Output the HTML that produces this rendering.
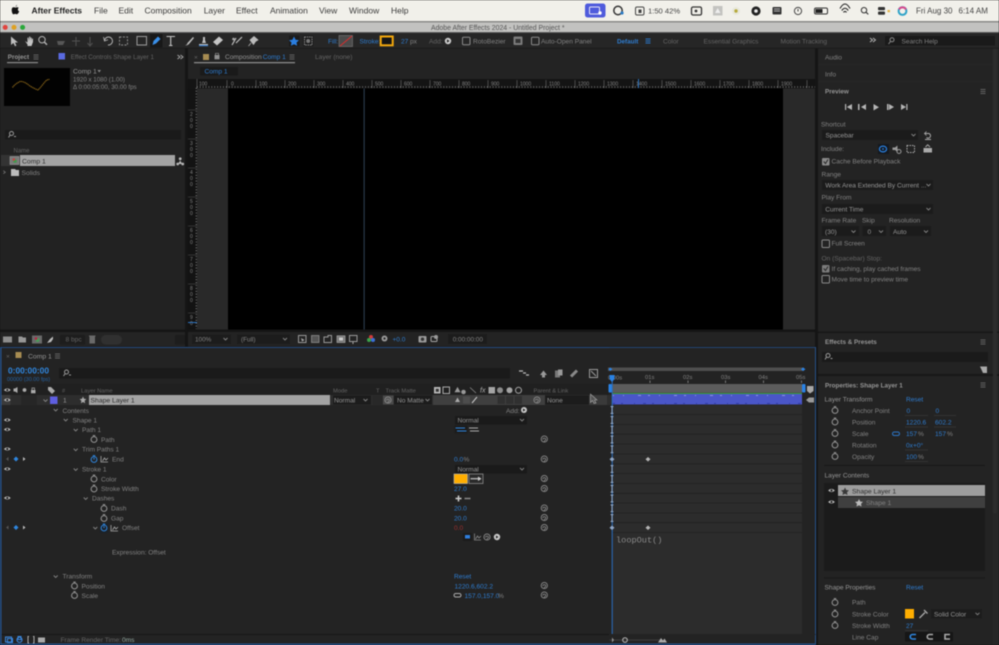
<!DOCTYPE html>
<html><head><meta charset="utf-8"><style>
html,body{margin:0;padding:0;background:#151515;width:999px;height:645px;overflow:hidden}
svg{display:block;filter:blur(.5px)}
text{font-family:"Liberation Sans",sans-serif;font-size:6.6px;fill:#828282}
.m{font-size:8.5px;fill:#3c3c3c}
.b{fill:#2e7ccf}
.l{fill:#959595}
.d{fill:#2e2e2e}
.h{fill:#646464}
.ic{fill:none;stroke:#b5b5b5;stroke-width:1}
.dk{fill:#1a1a1a}
</style></head><body>
<svg width="999" height="645" viewBox="0 0 999 645" xmlns="http://www.w3.org/2000/svg">
<defs>
<g id="sw"><circle cx="0" cy="0.5" r="2.9" fill="none" stroke="#979797" stroke-width="1"/><path d="M-1.2-3.4H1.2" stroke="#979797" stroke-width="1"/></g>
<g id="swb"><circle cx="0" cy="0.5" r="2.9" fill="none" stroke="#2f86de" stroke-width="1"/><path d="M-1.2-3.4H1.2M0 .5V-1.2" stroke="#2f86de" stroke-width="1"/></g>
<g id="sp"><circle r="3.1" fill="none" stroke="#8a8a8a" stroke-width=".9"/><path d="M-1.4 .5A1.4 1.4 0 1 1 1.4 .6L-.4 2.6" fill="none" stroke="#8a8a8a" stroke-width=".8"/></g>
<g id="eye"><path d="M-3.4 0Q0-3.2 3.4 0Q0 3.2-3.4 0Z" fill="#bdbdbd"/><circle r="1.1" fill="#222"/></g>
<g id="hb"><path d="M-2.5-2H2.5M-2.5 0H2.5M-2.5 2H2.5" stroke="#777" stroke-width=".8"/></g>
<g id="ar"><path d="M-2-1L0 1L2-1" fill="none" stroke="#858585" stroke-width=".9"/></g>
<g id="kf"><path d="M0-3.4V3.4M-1.4-3.4H1.4M-1.4 3.4H1.4" stroke="#8fa7c8" stroke-width="1.1"/></g>
</defs>

<!-- menu bar -->
<rect width="999" height="22" fill="#f1f0ea"/>
<rect y="21" width="999" height="1.5" fill="#8b8b88"/>
<path d="M15.5 6.5Q16.5 5.5 17 4.5Q17 6.2 15.7 6.8ZM12.5 7.5C14 6.8 15 7.6 15.7 7.6C16.4 7.6 17.3 6.8 18.7 7.7C17.4 8.8 17.7 10.7 19.2 11.3C18.6 13 17.6 14.4 16.7 14.3C15.9 14.2 15.6 13.8 15 13.9C14.3 14 13.8 14.5 13.2 14.3C12 13.7 10.9 9 12.5 7.5Z" fill="#111"/>
<text class="m" x="31.5" y="13.4" style="font-weight:700;fill:#222">After Effects</text>
<text class="m" x="94" y="13.4">File</text><text class="m" x="118.5" y="13.4">Edit</text><text class="m" x="144.5" y="13.4">Composition</text><text class="m" x="203.7" y="13.4">Layer</text><text class="m" x="236" y="13.4">Effect</text><text class="m" x="270" y="13.4">Animation</text><text class="m" x="319" y="13.4">View</text><text class="m" x="349" y="13.4">Window</text><text class="m" x="391" y="13.4">Help</text>
<rect x="585" y="3.5" width="20.5" height="14" rx="2.5" fill="#4f5bdc"/>
<rect x="589.5" y="7" width="10" height="7" rx="1" fill="none" stroke="#e6e6f8"/><circle cx="600" cy="13" r="1.7" fill="#fff"/>
<circle cx="618" cy="10.5" r="4.2" fill="none" stroke="#333" stroke-width="1.5"/><circle cx="622" cy="13" r="1.6" fill="#2a7ac4"/>
<rect x="635.5" y="7" width="8.5" height="8" rx="1.5" fill="none" stroke="#444"/><rect x="638.5" y="9.5" width="3" height="3.5" fill="#444"/>
<text x="648" y="13.5" style="font-size:7.6px;fill:#444">1:50 42%</text>
<rect x="691.5" y="7" width="10" height="8" rx="1.5" fill="none" stroke="#333" stroke-width="1.3"/><circle cx="696" cy="11" r="1.4" fill="#333"/>
<rect x="713" y="6" width="9.5" height="9.5" fill="#c3c3c0"/><path d="M715 13L717.7 8L720.5 13Z" fill="#eee"/>
<circle cx="736" cy="11" r="4" fill="#e8e8dc"/><circle cx="736" cy="11" r="1.7" fill="#b5a93b"/>
<circle cx="756" cy="11" r="4.6" fill="#222"/><circle cx="756" cy="11" r="1.8" fill="#eee"/>
<rect x="772.5" y="7" width="9" height="7.5" rx="1" fill="#333"/><path d="M774 9H780M774 11H780" stroke="#ddd" stroke-width=".7"/>
<circle cx="798" cy="11" r="3.6" fill="none" stroke="#444"/><path d="M798 9V11.5" stroke="#444"/>
<rect x="814.5" y="8" width="13" height="6" rx="1.5" fill="none" stroke="#333"/><rect x="815.5" y="9" width="7" height="4" fill="#222"/>
<path d="M840 8.5Q845-.5 850 8.5M841.8 10.5Q845 6 848.2 10.5M843.5 12.4Q845 10.5 846.5 12.4" fill="none" stroke="#222" stroke-width="1.1"/>
<circle cx="864" cy="10.2" r="2.7" fill="none" stroke="#333"/><path d="M866 12.2L868.3 14.4" stroke="#333" stroke-width="1.1"/>
<rect x="878" y="7" width="7" height="3.2" rx="1" fill="#333"/><rect x="878" y="11.5" width="7" height="3.2" rx="1" fill="#333"/><rect x="887.5" y="10" width="2.5" height="2.2" fill="#e5b64a"/>
<circle cx="902.5" cy="11" r="3.9" fill="none" stroke="#2fa3c8" stroke-width="2"/><path d="M899 9.5A4 4 0 0 1 906 9.5" fill="none" stroke="#d9488c" stroke-width="2"/>
<text x="916" y="13.4" style="font-size:8px;fill:#444">Fri Aug 30</text><text x="958.5" y="13.4" style="font-size:8px;fill:#444">6:14 AM</text>

<!-- title bar -->
<rect y="22.5" width="999" height="9.5" fill="#c2c2c0"/>
<rect y="32" width="999" height="1.2" fill="#5a5a5a"/>
<circle cx="5.2" cy="27.4" r="2.5" fill="#e0443e"/><circle cx="14" cy="27.4" r="2.5" fill="#dea123"/><circle cx="22.6" cy="27.4" r="2.5" fill="#2aa83a"/>
<text x="431" y="29.8" style="font-size:6.9px;fill:#565656">Adobe After Effects 2024 - Untitled Project *</text>

<!-- tool bar -->
<rect y="33" width="999" height="15" fill="#262626"/>
<path d="M11 36.5V45L13.4 43L15 46.3L16.4 45.6L15 42.5H18Z" fill="#bdbdbd"/>
<path d="M25 41L27.5 44.5V46H31.5L33 42V38.5L32 39V41L31.6 37.5L30.6 37.7V41L30.2 36.5L29.2 36.6L29 41L28.4 37.5L27.5 37.8L27.5 42.5Z" fill="#c4c4c4"/>
<circle cx="42" cy="39.7" r="3.2" class="ic"/><path d="M44.3 42L47 44.7" class="ic" style="stroke-width:1.4"/>
<path d="M57 41H65L63 45H58Z" fill="#575757"/><path d="M76 37V46M72 41H80M90 37V45M87.5 43L90 46L92.5 43" fill="none" stroke="#515151"/>
<path d="M104.5 41A4 4 0 1 1 108 45" class="ic"/><path d="M103.5 37L104.5 41L108 39.7" class="ic" style="stroke-width:.8"/>
<rect x="119.5" y="37" width="8" height="8" fill="none" stroke="#8e8e8e" stroke-dasharray="2 1.4"/>
<rect x="137" y="36.5" width="9.5" height="8.5" class="ic" style="stroke:#9a9a9a"/>
<rect x="150" y="34" width="12.5" height="13.5" fill="#181818"/><path d="M152.5 45L153.5 41L158 36.5L160.5 39L156 43.5Z" fill="#3a8fe8"/>
<path d="M166.5 36.5H175M170.7 36.5V45.5M169 45.5H172.5" fill="none" stroke="#c4c4c4" stroke-width="1.1"/>
<path d="M185 45.5Q187 45 187.5 43L193 37L194 38L189 44Q187.5 45.5 185 45.5Z" fill="#bdbdbd"/>
<path d="M199 44H208V46H199ZM202 43L203 40V37H205V40L206 43Z" fill="#c0c0c0"/><rect x="199" y="45" width="9" height="1.2" fill="#3b7bc7"/>
<path d="M213 42L219 36.5L223 40L217 45.5Z" fill="#c5c5c5"/>
<path d="M232 45L236 38M236 43L242 37" stroke="#bdbdbd" stroke-width="1.2"/><circle cx="233.5" cy="39" r="1.3" fill="#aaa"/>
<path d="M250 40L254 36.5L258 40L255.5 41.5L253.5 44.5ZM251 43L248.5 46" fill="#bbb" stroke="#bbb" stroke-width=".7"/>
<rect x="289" y="35.5" width="10.5" height="11" fill="#1b1b1b"/><path d="M294 36.5L295.6 39.7L299 40.2L296.5 42.5L297.1 45.8L294 44.2L290.9 45.8L291.5 42.5L289 40.2L292.4 39.7Z" fill="#2a7ee0"/>
<rect x="303" y="35.5" width="10.5" height="11" fill="#1d1d1d"/><rect x="304.5" y="37" width="7.5" height="8" fill="none" stroke="#8a8a8a" stroke-dasharray="1.5 .8"/><circle cx="308.2" cy="41" r="2" fill="#777"/>
<text class="b" x="328" y="43.3">Fill:</text><rect x="339" y="35.5" width="13.5" height="11" fill="#4b4b4b" stroke="#7b7b7b" stroke-width=".6"/><path d="M340 46L352 36" stroke="#e02b2b" stroke-width=".9"/>
<text class="b" x="359.5" y="43.3">Stroke:</text><rect x="380.7" y="36.5" width="12" height="8.8" fill="#151515" stroke="#f3a80d" stroke-width="2"/>
<text class="b" x="401" y="43.3">27</text><text x="410" y="43.3">px</text><text class="h" x="429" y="43.3">Add:</text><circle cx="448" cy="41" r="3.2" fill="#ccc"/><path d="M447 39.4L449.6 41L447 42.6Z" fill="#222"/>
<rect x="462.5" y="37.3" width="7.5" height="7.5" rx="1" fill="none" stroke="#8a8a8a"/><text x="473" y="43.3">RotoBezier</text>
<rect x="513.5" y="36.5" width="9" height="8.5" rx="1" fill="#7b7b7b"/><rect x="515.5" y="39" width="5" height="4" fill="#333"/>
<rect x="531.5" y="37.3" width="7.5" height="7.5" rx="1" fill="none" stroke="#8a8a8a"/><text x="541" y="43.3">Auto-Open Panel</text>
<text class="b" x="617" y="43.3" style="font-weight:700;font-size:6.3px">Default</text><g transform="translate(648 41)"><path d="M-2.5-2H2.5M-2.5 0H2.5M-2.5 2H2.5" stroke="#2b75c6"/></g>
<text class="h" x="663" y="43.3">Color</text><text class="h" x="703.5" y="43.3">Essential Graphics</text><text class="h" x="780.5" y="43.3">Motion Tracking</text>
<path d="M870 38L872.5 40L870 42M873 38L875.5 40L873 42" fill="none" stroke="#bbb" stroke-width=".9"/>
<rect x="885" y="36" width="110" height="9.5" class="dk"/><circle cx="892" cy="39.8" r="2" class="ic" style="stroke:#888"/><path d="M890.5 41.5L888.5 44" stroke="#888"/><text x="901.5" y="43.5">Search Help</text>

<!-- project panel -->
<rect x="0" y="48.5" width="185" height="281" fill="#222"/>
<text class="l" x="7.8" y="59" style="font-size:6.3px;font-weight:700">Project</text><rect x="7" y="62" width="31" height="1.2" fill="#8a8a8a"/><use href="#hb" x="36" y="57"/>
<rect x="58.5" y="53" width="6.5" height="6.5" fill="#5a6ae0"/><text class="h" x="70.7" y="59" style="font-size:6.25px">Effect Controls Shape Layer 1</text>
<path d="M177.5 55L180 57L177.5 59M180.5 55L183 57L180.5 59" fill="none" stroke="#aaa" stroke-width=".9"/>
<rect x="4" y="68" width="66" height="38" fill="#020202"/>
<path d="M12.5 87.5Q15 84 20 81.5Q24 81 30 86Q35 89 38 90Q41 87 44 83Q47 79 49.5 79.5" fill="none" stroke="#8a6518" stroke-width="1.1" stroke-dasharray="1.3 .5"/>
<text class="l" x="73" y="73.5" style="font-size:6.8px">Comp 1</text><path d="M97.5 70L101 70L99.2 72.5Z" fill="#888"/>
<text x="73" y="81.4" style="font-size:6.2px">1920 x 1080 (1.00)</text><text x="73" y="89" style="font-size:6.2px">Δ 0:00:05:00, 30.00 fps</text>
<rect x="5" y="130" width="176" height="9.5" class="dk"/><circle cx="11.5" cy="133.5" r="2" class="ic" style="stroke:#999"/><path d="M10 135.2L8.5 137.5M14 136.5H16" stroke="#999"/>
<text class="h" x="13.5" y="152.5" style="font-size:6px">Name</text>
<rect x="1" y="155" width="19" height="11" fill="#333"/><rect x="10" y="156.5" width="9" height="8" fill="#7a7a7a" stroke="#a5a5a5" stroke-width=".5"/><circle cx="15" cy="161" r="1.8" fill="#3f9c4b"/><circle cx="13.8" cy="159.5" r="1.3" fill="#c04545"/>
<rect x="20" y="155" width="155" height="11" fill="#a3a3a3"/><text class="d" x="22" y="163.4" style="font-size:6.8px">Comp 1</text>
<path d="M178 164L180.2 160.5L182.4 164Z" fill="#b5b5b5"/><circle cx="180.2" cy="158.8" r="1.4" fill="#b5b5b5"/><circle cx="177.7" cy="164" r="1.4" fill="#b5b5b5"/><circle cx="182.7" cy="164" r="1.4" fill="#b5b5b5"/>
<path d="M3.3 170.7L5.3 172.2L3.3 173.7" fill="none" stroke="#777" stroke-width=".8"/><path d="M11 169H15L16 170H19V176H11Z" fill="#bcbcbc"/><text x="21.5" y="174.8" style="font-size:6.8px">Solids</text>
<!-- project footer -->
<rect x="0" y="332" width="185" height="14.5" fill="#242424"/>
<rect x="3" y="336.5" width="9" height="6" fill="#8d8d8d"/><path d="M18.5 336.5H22L23 337.5H26V342.5H18.5Z" fill="#979797"/><rect x="32" y="335.5" width="10" height="8" fill="#6a6a6a"/><circle cx="37.5" cy="340" r="2" fill="#4b9a5a"/><circle cx="36" cy="338.5" r="1.3" fill="#b24"/><path d="M47 343L50 339L53 336.5V339L51 342Z" fill="#bbb"/>
<rect x="60" y="335" width="25" height="9.5" fill="#1d1d1d"/><text class="h" x="65.5" y="341.6">8 bpc</text><rect x="89.5" y="336.5" width="5.5" height="7" fill="#6a6a6a"/><rect x="89" y="335.5" width="6.5" height="1" fill="#6a6a6a"/><rect x="101" y="335" width="21" height="9.5" rx="4.7" fill="#303030"/>
<rect x="175" y="335" width="10" height="9.5" fill="#1d1d1d"/>

<!-- composition panel -->
<rect x="188" y="48.5" width="627" height="281" fill="#232323"/>
<text class="h" x="194" y="59.3">×</text><rect x="203" y="54" width="6" height="6" fill="#a78c52"/>
<rect x="214.5" y="55" width="5" height="4.3" fill="#8f8f8f"/><path d="M215.5 55V53.3H218.5V55" fill="none" stroke="#8f8f8f" stroke-width=".7"/>
<text class="l" x="225" y="59">Composition</text><text class="b" x="262.7" y="59">Comp 1</text><use href="#hb" x="292" y="57"/><rect x="194" y="62" width="101" height="1.3" fill="#8a8a8a"/>
<text class="h" x="315" y="59">Layer (none)</text>
<rect x="200" y="67" width="38" height="8.5" fill="#1a1a1a"/><text class="b" x="204.5" y="73.5">Comp 1</text>
<!-- rulers -->
<rect x="188" y="79" width="627" height="9.5" fill="#141414"/>
<path stroke="#888" stroke-width=".45" d="M197 88V79M227 88V80M256 88V80M285 88V80M314 88V80M343 88V80M372 88V80M401 88V80M430 88V80M459 88V80M488 88V80M517 88V80M546 88V80M575 88V80M604 88V80M633 88V80M662 88V80M691 88V80M720 88V80M749 88V80M778 88V80M807 88V80"/>
<path stroke="#9a9a9a" stroke-width="1.4" stroke-dasharray=".6 2.3" d="M197 87H815"/>
<g><text x="199" y="85.5" style="font-size:5px">100</text><text x="231" y="85.5" style="font-size:5px">0</text><text x="259" y="85.5" style="font-size:5px">100</text><text x="288" y="85.5" style="font-size:5px">200</text><text x="317" y="85.5" style="font-size:5px">300</text><text x="346" y="85.5" style="font-size:5px">400</text><text x="375" y="85.5" style="font-size:5px">500</text><text x="404" y="85.5" style="font-size:5px">600</text><text x="433" y="85.5" style="font-size:5px">700</text><text x="462" y="85.5" style="font-size:5px">800</text><text x="491" y="85.5" style="font-size:5px">900</text><text x="520" y="85.5" style="font-size:5px">1000</text><text x="549" y="85.5" style="font-size:5px">1100</text><text x="578" y="85.5" style="font-size:5px">1200</text><text x="607" y="85.5" style="font-size:5px">1300</text><text x="636" y="85.5" style="font-size:5px">1400</text><text x="665" y="85.5" style="font-size:5px">1500</text><text x="694" y="85.5" style="font-size:5px">1600</text><text x="723" y="85.5" style="font-size:5px">1700</text><text x="752" y="85.5" style="font-size:5px">1800</text><text x="781" y="85.5" style="font-size:5px">1900</text></g>
<rect x="638" y="79" width="1" height="9" fill="#2a72c0"/>
<rect x="188" y="88.5" width="9" height="241" fill="#131313"/>
<path stroke="#9a9a9a" stroke-width="1.4" stroke-dasharray=".6 2.3" d="M196.3 88V329"/>
<path stroke="#555" stroke-width=".6" d="M188 110H197M188 139H197M188 168H197M188 197H197M188 226H197M188 255H197M188 284H197M188 313H197"/>
<g><text x="190" y="116" style="font-size:5px">2</text><text x="190" y="122" style="font-size:5px">0</text><text x="190" y="128" style="font-size:5px">0</text><text x="190" y="145" style="font-size:5px">3</text><text x="190" y="151" style="font-size:5px">0</text><text x="190" y="157" style="font-size:5px">0</text><text x="190" y="174" style="font-size:5px">4</text><text x="190" y="180" style="font-size:5px">0</text><text x="190" y="186" style="font-size:5px">0</text><text x="190" y="203" style="font-size:5px">5</text><text x="190" y="209" style="font-size:5px">0</text><text x="190" y="215" style="font-size:5px">0</text><text x="190" y="232" style="font-size:5px">6</text><text x="190" y="238" style="font-size:5px">0</text><text x="190" y="244" style="font-size:5px">0</text><text x="190" y="261" style="font-size:5px">7</text><text x="190" y="267" style="font-size:5px">0</text><text x="190" y="273" style="font-size:5px">0</text><text x="190" y="290" style="font-size:5px">8</text><text x="190" y="296" style="font-size:5px">0</text><text x="190" y="302" style="font-size:5px">0</text><text x="190" y="319" style="font-size:5px">9</text><text x="190" y="325" style="font-size:5px">0</text></g>
<rect x="188" y="322" width="9" height="1" fill="#2a72c0"/>
<rect x="197" y="88.5" width="31" height="241" fill="#292929"/><rect x="783" y="88.5" width="32" height="241" fill="#292929"/>
<rect x="228" y="88.5" width="555" height="241" fill="#000"/>
<rect x="363.7" y="88.5" width=".9" height="241" fill="#34495f"/>
<!-- comp footer -->
<rect x="188" y="332" width="627" height="14.5" fill="#232323"/>
<rect x="192" y="334.5" width="39" height="9.5" fill="#1c1c1c"/><text x="195" y="341.6" style="font-size:6.4px">100%</text><use href="#ar" x="225.5" y="339"/>
<rect x="237" y="334.5" width="53" height="9.5" fill="#1c1c1c"/><text x="241" y="341.6" style="font-size:6.4px">(Full)</text><use href="#ar" x="285" y="339"/>
<rect x="298.5" y="335.5" width="7.5" height="7" fill="none" stroke="#979797"/><path d="M301 338L304.5 340L302 341.5Z" fill="#aaa"/>
<rect x="311.5" y="335.5" width="7.5" height="7" fill="#555" stroke="#979797" stroke-width=".7"/>
<path d="M324 342.5V337H328V335.5H331.5V342.5Z" fill="none" stroke="#979797"/>
<rect x="337" y="335.8" width="8" height="6.7" fill="#777" stroke="#a5a5a5" stroke-width=".7"/><rect x="339" y="337.5" width="4" height="3" fill="#ccc"/>
<rect x="349.5" y="335.5" width="7.5" height="6" fill="none" stroke="#979797"/><path d="M353 342V344" stroke="#aaa"/>
<circle cx="371" cy="337" r="2" fill="#d23b3b"/><circle cx="369" cy="340" r="2" fill="#3ba34b"/><circle cx="373" cy="340" r="2" fill="#3a6fd8"/>
<circle cx="384.5" cy="338.5" r="3" fill="#999"/><circle cx="384.5" cy="338.5" r="1.1" fill="#232323"/>
<text class="b" x="392.5" y="341.5" style="font-size:6.5px">+0.0</text>
<rect x="418.5" y="336" width="8" height="6.5" rx="1" fill="#9a9a9a"/><circle cx="422.5" cy="339.2" r="1.7" fill="#333"/>
<rect x="431" y="336.5" width="6" height="5" rx="1" fill="none" stroke="#a5a5a5"/><circle cx="436" cy="337" r="2" fill="#999"/>
<rect x="448" y="334" width="39" height="9.8" fill="#1c1c1c"/><text x="452.7" y="341.6" style="font-size:6.4px">0:00:00:00</text>

<!-- right column -->
<rect x="818" y="48.5" width="181" height="596.5" fill="#262626"/>
<rect x="818" y="48.5" width="174.5" height="15.5" fill="#232323"/><rect x="818" y="65.5" width="174.5" height="15.5" fill="#232323"/><rect x="818" y="82.5" width="174.5" height="249" fill="#232323"/>
<rect x="818" y="331.5" width="181" height="1.5" fill="#171717"/><rect x="818" y="374" width="181" height="2" fill="#171717"/>
<text x="825" y="59.3">Audio</text><text x="825" y="76.3">Info</text><text class="l" x="825" y="93.5" style="font-weight:700;font-size:6.3px">Preview</text><use href="#hb" x="983" y="91.5"/>
<g fill="#b5b5b5"><path d="M845 104V110H846.2V104ZM852 104L846.8 107L852 110Z"/><path d="M866 104L861 107L866 110ZM858 104H859.5V110H858Z"/><path d="M873.5 104V110.5L879 107.2Z"/><path d="M887 104V110H888.5V104ZM889 104L894 107L889 110Z"/><path d="M901 104L906 107L901 110ZM906.3 104H907.5V110H906.3Z"/></g>
<text x="821" y="126.3">Shortcut</text>
<rect x="822" y="130" width="96" height="10" fill="#1b1b1b"/><text class="l" x="825.5" y="137.3">Spacebar</text><use href="#ar" x="913.5" y="135"/>
<path d="M925 133.5H929A2.4 2.4 0 1 1 926.5 137.5" class="ic" style="stroke:#aaa"/><path d="M926.5 131.5L924.5 133.5L926.5 135.5" class="ic" style="stroke:#aaa;stroke-width:.8"/><path d="M925 139.5H931" stroke="#aaa"/>
<text x="821" y="151">Include:</text>
<rect x="878" y="144" width="11" height="10" fill="#15191f"/><ellipse cx="883" cy="149" rx="3.6" ry="2.9" fill="none" stroke="#2a82e4" stroke-width="1.2"/><circle cx="883" cy="149" r=".9" fill="#2a82e4"/>
<path d="M892.5 147.5H895L897.5 145.5V152L895 150H892.5Z" fill="#9a9a9a"/><circle cx="899" cy="151.5" r="2" fill="none" stroke="#9a9a9a"/>
<rect x="907" y="145.5" width="7.5" height="7" fill="none" stroke="#aaa" stroke-dasharray="1.5 1"/>
<rect x="923.5" y="148" width="8.5" height="4.5" fill="#aaa"/><path d="M925.5 147L927.7 144.8L930 147" fill="none" stroke="#aaa"/>
<rect x="822" y="158" width="7.5" height="7.5" rx="1" fill="#8a8a8a"/><path d="M823.7 161.5L825.5 163.5L828 159.5" fill="none" stroke="#2a2a2a"/><text x="831.5" y="163.4">Cache Before Playback</text>
<text x="821.5" y="176.5">Range</text>
<rect x="822" y="180" width="111" height="10" fill="#1b1b1b"/><text class="l" x="825.3" y="187.5">Work Area Extended By Current ...</text><use href="#ar" x="928.5" y="185"/>
<text x="821.5" y="199.5">Play From</text>
<rect x="822" y="204" width="111" height="10" fill="#1b1b1b"/><text class="l" x="825.3" y="211.5">Current Time</text><use href="#ar" x="928.5" y="209"/>
<text x="821.5" y="222.5">Frame Rate</text><text x="862" y="222.5">Skip</text><text x="889" y="222.5">Resolution</text>
<rect x="822" y="226" width="37" height="10" fill="#1b1b1b"/><text class="l" x="825" y="233.8">(30)</text><use href="#ar" x="853.5" y="231.5"/>
<rect x="862.5" y="226" width="23.5" height="10" fill="#1b1b1b"/><text class="l" x="867.5" y="233.8">0</text><use href="#ar" x="881" y="231.5"/>
<rect x="890" y="226" width="41" height="10" fill="#1b1b1b"/><text class="l" x="893" y="233.8">Auto</text><use href="#ar" x="926" y="231.5"/>
<rect x="822" y="240" width="7.5" height="7.5" rx="1" fill="none" stroke="#8a8a8a"/><text x="831.5" y="245.7">Full Screen</text>
<text class="h" x="821.5" y="260.3">On (Spacebar) Stop:</text>
<rect x="822" y="265" width="7.5" height="7.5" rx="1" fill="#7b7b7b"/><path d="M823.7 268.5L825.5 270.5L828 266.5" fill="none" stroke="#2a2a2a"/><text x="831.5" y="271.2">If caching, play cached frames</text>
<rect x="822" y="275.5" width="7.5" height="7.5" rx="1" fill="none" stroke="#8a8a8a"/><text x="831.5" y="281.7">Move time to preview time</text>

<!-- effects -->
<rect x="818" y="333" width="174.5" height="41" fill="#232323"/>
<text class="l" x="825" y="344" style="font-weight:700;font-size:6.3px">Effects &amp; Presets</text><use href="#hb" x="983" y="342"/>
<rect x="822" y="352" width="166" height="10" class="dk"/><circle cx="828" cy="355.5" r="2" class="ic" style="stroke:#999"/><path d="M826.5 357L825 359.5M830.5 358.5H832.5" stroke="#999"/>
<path d="M980 366.5H987V373H983Z" fill="#aaa"/>
<!-- properties -->
<rect x="818" y="376" width="174.5" height="269" fill="#232323"/>
<rect x="993" y="48.5" width="4" height="465" rx="2" fill="#2c2c2c"/>
<text class="l" x="825" y="387.3" style="font-weight:700;font-size:6.3px">Properties: Shape Layer 1</text><use href="#hb" x="983" y="385"/>
<text class="l" x="824.5" y="401.5">Layer Transform</text><text class="b" x="906" y="401.5">Reset</text>
<use href="#sw" x="835" y="410"/><text x="852" y="412.8">Anchor Point</text><text class="b" x="906.5" y="412.8">0</text><text class="b" x="935.5" y="412.8">0</text><path d="M905 415.5H928M934 415.5H956" stroke="#333"/>
<use href="#sw" x="835" y="421.5"/><text x="852" y="424.5">Position</text><text class="b" x="906" y="424.5">1220.6</text><text class="b" x="935" y="424.5">602.2</text><path d="M905 427H928M934 427H956" stroke="#333"/>
<use href="#sw" x="835" y="433"/><text x="852" y="436">Scale</text><rect x="892.5" y="432" width="7" height="3.5" rx="1.7" fill="none" stroke="#2b75c6"/><text class="b" x="906" y="436">157</text><text x="918" y="436">%</text><text class="b" x="935" y="436">157</text><text x="947" y="436">%</text>
<use href="#sw" x="835" y="444.5"/><text x="852" y="447.5">Rotation</text><text class="b" x="906" y="447.5">0x+0°</text><path d="M905 450H928" stroke="#333"/>
<use href="#sw" x="835" y="456"/><text x="852" y="459">Opacity</text><text class="b" x="906" y="459">100</text><text x="918" y="459">%</text><path d="M905 461.5H928" stroke="#333"/>
<rect x="824" y="465" width="161" height=".8" fill="#161616"/>
<text class="l" x="824.5" y="477.5">Layer Contents</text>
<rect x="824" y="483" width="161" height="88" fill="#1b1b1b"/>
<use href="#eye" x="831.5" y="490.5"/><use href="#eye" x="831.5" y="502"/>
<rect x="838" y="485" width="147" height="11" fill="#9d9d9d"/><rect x="838" y="497" width="147" height="11" fill="#3f3f3f"/>
<path d="M845 487.5L846.2 490L849 490.4L847 492.3L847.5 495L845 493.7L842.5 495L843 492.3L841 490.4L843.8 490Z" fill="#3a3a3a"/>
<text class="d" x="852" y="493.3" style="font-size:6.8px">Shape Layer 1</text>
<path d="M859 499L860.2 501.5L863 501.9L861 503.8L861.5 506.5L859 505.2L856.5 506.5L857 503.8L855 501.9L857.8 501.5Z" fill="#bbb"/>
<text x="866" y="504.8" style="font-size:6.8px">Shape 1</text>
<rect x="824" y="577.5" width="161" height=".8" fill="#161616"/>
<text class="l" x="824.5" y="589.5">Shape Properties</text><text class="b" x="906" y="589.5">Reset</text>
<use href="#sw" x="835" y="602"/><text x="852" y="604.5">Path</text>
<use href="#sw" x="835" y="613.5"/><text x="852" y="616.3">Stroke Color</text><rect x="905" y="609" width="9" height="9.5" fill="#ffae00"/><path d="M919.5 618L925 612.5M924 610L927.5 613.5" stroke="#aaa" stroke-width="1.3"/>
<rect x="931" y="609" width="51" height="9.5" fill="#1c1c1c"/><text class="l" x="934" y="616.3">Solid Color</text><use href="#ar" x="977.5" y="613.8"/>
<use href="#sw" x="835" y="625"/><text x="852" y="628">Stroke Width</text><text class="b" x="906" y="628">27</text><path d="M905 630.5H928" stroke="#333"/>
<text x="852" y="639.5">Line Cap</text><rect x="905" y="632" width="48" height="9.5" fill="#161616"/><path d="M916 634.5H912.5A2.2 2.2 0 0 0 912.5 639H916" fill="none" stroke="#2f86de" stroke-width="1.6"/><path d="M933 634.5H929.5A2.2 2.2 0 0 0 929.5 639H933" fill="none" stroke="#aaa" stroke-width="1.6"/><path d="M950 634.5H945V639H950" fill="none" stroke="#aaa" stroke-width="1.6"/>

<!-- timeline -->
<rect x="0" y="347" width="816" height="298" fill="#232323"/>
<rect x="0" y="347" width="816" height=".9" fill="#27528a"/><rect x="0" y="347" width="1.5" height="298" fill="#27528a"/><rect x="815" y="347" width="1" height="298" fill="#27528a"/><rect x="0" y="643.5" width="816" height="1.5" fill="#27528a"/>
<text class="h" x="6" y="358.7">×</text><rect x="15.5" y="352" width="6" height="6" fill="#a78c52"/><text class="l" x="28" y="358.3" style="font-size:6.8px">Comp 1</text><use href="#hb" x="57.5" y="356"/>
<text x="8" y="373.5" style="font-size:8.4px;font-weight:700;fill:#2f86de">0:00:00:00</text><text x="7" y="380.8" style="font-size:5.5px;fill:#25609f">00000 (30.00 fps)</text>
<rect x="59" y="368" width="451" height="10.5" fill="#1a1a1a"/><circle cx="66.5" cy="372" r="2" class="ic" style="stroke:#999"/><path d="M65 373.8L63.5 376M69 375H71" stroke="#999"/>
<path d="M519 371H523M523 373H526M526 375H529" stroke="#bbb" stroke-width="1.2"/><path d="M540 375L543.5 370.5L547 375H545V377.5H542V375Z" fill="#999"/><rect x="555" y="370.5" width="5" height="7" fill="#777"/><rect x="558" y="369.5" width="4.5" height="6" fill="#999"/><path d="M571 376.5L577 370.5" stroke="#8a8a8a" stroke-width="3"/>
<rect x="589.5" y="369.5" width="8" height="8" fill="none" stroke="#999"/><path d="M591 371L596 376" stroke="#999"/>
<!-- column header -->
<rect x="1.5" y="384" width="607" height="11" fill="#202020"/>
<use href="#eye" x="7.3" y="390"/><path d="M13.5 388.5H15L17.5 387V393L15 391.5H13.5Z" fill="#aaa"/><circle cx="24.5" cy="390" r="1.9" fill="#aaa"/><rect x="31" y="390" width="4.5" height="3.3" fill="#aaa"/><path d="M32 390V388H34.5V390" fill="none" stroke="#aaa" stroke-width=".7"/>
<path d="M48 387H51L55 391L52 394L48 390Z" fill="#aaa"/>
<text class="h" x="62" y="392.3" style="font-size:5.6px">#</text><text class="h" x="81" y="392.3" style="font-size:5.8px">Layer Name</text><text class="h" x="333" y="392.3" style="font-size:5.8px">Mode</text><text class="h" x="376" y="392.3" style="font-size:5.8px">T</text><text class="h" x="385.5" y="392.3" style="font-size:5.8px">Track Matte</text>
<rect x="434" y="387" width="6.5" height="6.5" fill="#b9b9b9"/><rect x="435.8" y="388.8" width="3" height="3" fill="#333"/><rect x="443" y="387" width="6.5" height="6.5" fill="none" stroke="#aaa"/>
<path d="M455 392L457.5 387.5L460 392ZM463.5 390a2 2 0 1 0 .01 0M470 387.5L476 393" fill="#999" stroke="#999" stroke-width=".6"/>
<text x="480" y="392.5" style="font-size:7px;font-style:italic;fill:#aaa">fx</text><rect x="488.5" y="387" width="6.5" height="6.5" fill="#a5a5a5"/><circle cx="500" cy="390.3" r="3" fill="#8d8d8d"/><circle cx="509.5" cy="390.3" r="3" fill="#a5a5a5"/><circle cx="518.5" cy="390.3" r="3" fill="none" stroke="#a5a5a5"/>
<text class="h" x="533.5" y="392.3" style="font-size:5.8px">Parent &amp; Link</text>
<!-- layer row -->
<rect x="1.5" y="395" width="608" height="10" fill="#2d2d2d"/>
<rect x="1.5" y="395" width="9" height="10" fill="#3b3b3b"/><use href="#eye" x="7.3" y="400"/><rect x="21" y="395" width="16" height="10" fill="#262626"/><use href="#ar" x="45.5" y="400.5"/>
<rect x="50" y="396.5" width="7.5" height="7.5" fill="#5e5ee0"/><text class="l" x="63" y="402.5">1</text><path d="M83 396.5L84 398.8L86.4 399.1L84.6 400.8L85.1 403.2L83 402L80.9 403.2L81.4 400.8L79.6 399.1L82 398.8Z" fill="#aaa"/>
<rect x="89" y="395" width="241" height="10" fill="#a3a3a3"/><text class="d" x="90.5" y="402.6" style="font-size:6.8px">Shape Layer 1</text>
<rect x="333" y="395.5" width="38" height="9" fill="#1c1c1c"/><text class="l" x="334" y="402.5">Normal</text><use href="#ar" x="365.5" y="400"/>
<rect x="372.5" y="395.5" width="10" height="9" fill="#282828"/><rect x="383" y="395.5" width="10.5" height="9" fill="#4a4a4a"/><use href="#sp" x="388" y="400"/>
<rect x="394" y="395.5" width="38" height="9" fill="#1c1c1c"/><text class="l" x="397" y="402.5">No Matte</text><use href="#ar" x="427.5" y="400"/>
<rect x="433" y="395" width="112" height="10" fill="#3f3f3f"/><path d="M455 402L457.5 397.5L460 402Z" fill="#aaa"/><rect x="463" y="396.5" width="7" height="7" fill="#4d4d4d"/><path d="M472 403L477 397" stroke="#ccc"/><rect x="497.5" y="396" width="7.5" height="8" fill="#303030"/><rect x="506" y="396" width="7.5" height="8" fill="#303030"/><rect x="514.5" y="396" width="7.5" height="8" fill="#303030"/><use href="#sp" x="537" y="400"/>
<rect x="545" y="395.5" width="44" height="9" fill="#1c1c1c"/><text class="l" x="547" y="402.5">None</text><rect x="589" y="395" width="20" height="10" fill="#3a3a3a"/>
<path d="M590.5 394V402.5L592.5 400.5L594 403.5L596 403L594.5 400L597 400Z" fill="#555" stroke="#aaa" stroke-width=".6"/>
<!-- property rows -->
<use href="#ar" x="55.7" y="410"/><text x="62.5" y="413">Contents</text><text x="506" y="413">Add:</text><circle cx="524" cy="410" r="3" fill="#c8c8c8"/><path d="M523 408.5L525.5 410L523 411.5Z" fill="#222"/>
<use href="#eye" x="7.3" y="420"/><use href="#ar" x="65.7" y="420"/><text x="72.5" y="422.7">Shape 1</text><rect x="455" y="416" width="72" height="8.5" fill="#1a1a1a"/><text class="l" x="457.5" y="422.4">Normal</text><use href="#ar" x="522" y="420"/>
<use href="#eye" x="7.3" y="429.5"/><use href="#ar" x="75.7" y="430"/><text x="82" y="432">Path 1</text><rect x="454.5" y="425.5" width="13" height="8" fill="#1c1c1c"/><path d="M455.5 428H465M457 431H466.5" stroke="#2f86de"/><path d="M469 428H478M470 431H479" stroke="#aaa"/>
<use href="#sw" x="94" y="439"/><text x="101" y="441.8">Path</text><use href="#sp" x="544.3" y="439"/>
<use href="#eye" x="7.3" y="449"/><use href="#ar" x="75.7" y="449.7"/><text x="82" y="451.7">Trim Paths 1</text>
<path d="M8.5 457L6 459L8.5 461Z" fill="#555"/><path d="M16 456.5L18.5 459L16 461.5L13.5 459Z" fill="#2f86de"/><path d="M23 457L25.5 459L23 461Z" fill="#bbb"/>
<use href="#swb" x="94" y="459"/><path d="M101 456V462H108M102.5 461L104.5 458L106 460L108 458" fill="none" stroke="#aaa" stroke-width=".8"/><text x="112" y="461.5">End</text><text class="b" x="454" y="461.3">0.0</text><text x="463.5" y="461.3">%</text><use href="#sp" x="544.3" y="459"/>
<use href="#eye" x="7.3" y="469"/><use href="#ar" x="75.7" y="469.5"/><text x="82" y="471.5">Stroke 1</text><rect x="455" y="465" width="72" height="8.5" fill="#1a1a1a"/><text class="l" x="457.5" y="471.5">Normal</text><use href="#ar" x="522" y="469"/>
<use href="#sw" x="94" y="478.5"/><text x="101" y="481.3">Color</text><rect x="454" y="474" width="13.5" height="9.5" fill="#ffae00" stroke="#bbb" stroke-width=".6"/><rect x="469" y="474" width="14" height="9.5" fill="#2a2a2a" stroke="#999" stroke-width=".7"/><path d="M470.5 478.7H478" stroke="#aaa" stroke-width="1.5"/><path d="M478 476.5L481.5 478.7L478 481Z" fill="#ccc"/><use href="#sp" x="544.3" y="478.5"/>
<use href="#sw" x="94" y="488.5"/><text x="101" y="491.2">Stroke Width</text><text class="b" x="454" y="491.2">27.0</text><use href="#sp" x="544.3" y="488.5"/>
<use href="#eye" x="7.3" y="498"/><use href="#ar" x="85.7" y="498.5"/><text x="92" y="500.7">Dashes</text><path d="M455.5 498.5H461.5M458.5 495.5V501.5" stroke="#ccc" stroke-width="1.5"/><path d="M464.5 498.5H470.5" stroke="#888" stroke-width="1.5"/>
<use href="#sw" x="104" y="508"/><text x="111" y="510.7">Dash</text><text class="b" x="454" y="510.7">20.0</text><use href="#sp" x="544.3" y="508"/>
<use href="#sw" x="104" y="518"/><text x="111" y="520.5">Gap</text><text class="b" x="454" y="520.5">20.0</text><use href="#sp" x="544.3" y="517.5"/>
<path d="M8.5 525.5L6 527.5L8.5 529.5Z" fill="#555"/><path d="M16 525L18.5 527.5L16 530L13.5 527.5Z" fill="#2f86de"/><path d="M23 525.5L25.5 527.5L23 529.5Z" fill="#bbb"/>
<use href="#ar" x="95.3" y="528"/><rect x="100" y="523" width="8" height="10" fill="#1b2128"/><use href="#swb" x="104" y="527.5"/><path d="M111 525V531H118M112.5 530L114.5 527L116 529L118 527" fill="none" stroke="#aaa" stroke-width=".8"/><text x="122" y="530.2">Offset</text><text x="454" y="530.2" style="fill:#9b2f2f">0.0</text><use href="#sp" x="544.3" y="527.5"/>
<rect x="463" y="533" width="9" height="8" fill="#1b1b1b"/><rect x="465" y="535" width="5" height="3.5" fill="#2f7edc"/><path d="M474.5 533.5V540H481M475.5 539L477.5 536L479 538L481 536" fill="none" stroke="#888" stroke-width=".8"/><use href="#sp" x="487" y="537"/><circle cx="497" cy="537" r="3.2" fill="#c8c8c8"/><path d="M496 535.5L498.5 537L496 538.5Z" fill="#222"/>
<text x="112" y="554.3">Expression: Offset</text>
<use href="#ar" x="55.7" y="576.5"/><text x="62.5" y="578.5">Transform</text><text class="b" x="454" y="578.5">Reset</text>
<use href="#sw" x="74.5" y="585.5"/><text x="81.5" y="588.3">Position</text><text class="b" x="454.5" y="588.3">1220.6,602.2</text><use href="#sp" x="544.3" y="585.5"/>
<use href="#sw" x="74.5" y="595"/><text x="81.5" y="598">Scale</text><rect x="454" y="593.5" width="7" height="3.5" rx="1.7" fill="none" stroke="#aaa"/><text class="b" x="464.5" y="598">157.0,157.0</text><text x="498" y="598">%</text><use href="#sp" x="544.3" y="595"/>
<!-- status -->
<rect x="1.5" y="634" width="814" height=".8" fill="#151515"/>
<rect x="5.5" y="637" width="6" height="5" fill="none" stroke="#3a86dc"/><rect x="7.5" y="638.5" width="5" height="4" fill="none" stroke="#3a86dc"/><circle cx="19.5" cy="639.8" r="2.6" fill="none" stroke="#3a86dc"/><rect x="18" y="636.5" width="3" height="3" fill="none" stroke="#3a86dc"/>
<path d="M29 636.5H28V643H29M33 636.5H34V643H33" fill="none" stroke="#aaa"/><rect x="38" y="637.5" width="7" height="5" fill="#aaa"/>
<text class="h" x="60.5" y="642">Frame Render Time:</text><text x="122" y="642" style="fill:#93a8a0">0ms</text>
<!-- timeline right -->
<rect x="609" y="347.9" width="206" height="295.6" fill="#232323"/>
<rect x="608" y="367.5" width="196" height="3.5" fill="#4f4f4f"/><path d="M610 367.5L612.5 369.3L610 371L608.5 369.3ZM803 367.5L805.5 369.3L803 371L801 369.3Z" fill="#2a82e4"/>
<g><text x="608" y="379.5" style="font-size:5.8px">0:00s</text><text x="645" y="379" style="font-size:5.8px">01s</text><text x="683" y="379" style="font-size:5.8px">02s</text><text x="721" y="379" style="font-size:5.8px">03s</text><text x="758.5" y="379" style="font-size:5.8px">04s</text><text x="796" y="379" style="font-size:5.8px">05s</text></g>
<path stroke="#777" d="M650 380.5V383M688 380.5V383M725.5 380.5V383M763.5 380.5V383M801.5 380.5V383"/>
<rect x="612" y="384" width="190" height="8.8" fill="#5c5c5c"/><rect x="608.5" y="384" width="3.5" height="8.5" rx="1" fill="#2a82e4"/><rect x="802" y="384" width="3.5" height="8.5" rx="1" fill="#2a82e4"/>
<rect x="607" y="395" width="5" height="10" fill="#2e2e2e"/>
<rect x="612" y="393" width="190" height="1" fill="#37a03a"/><rect x="612" y="394" width="190" height="10.5" fill="#4a56c8"/>
<path d="M612 395.5H802" stroke="#8a93e0" stroke-width=".9" stroke-dasharray="2 9 1 14 3 7"/><path d="M612 403.5H802" stroke="#2f3aa6" stroke-width=".9" stroke-dasharray="3 6 2 11 1 8"/>
<rect x="612" y="405" width="190" height="229" fill="#2c2c2c"/>
<path stroke="#212121" stroke-width=".8" d="M612 414.5H802M612 424.4H802M612 434.2H802M612 444H802M612 454H802M612 463.8H802M612 473.6H802M612 483.4H802M612 493.3H802M612 503.1H802M612 513H802M612 522.7H802M612 532.6H802"/>
<path d="M807 386H813.5V391L810 393.5L807 391Z" fill="#a8a8a8"/><path d="M806 400L809 397.5H814V402.5H809Z" fill="#9a9a9a"/>
<rect x="611.7" y="375" width="1" height="259" fill="#2a6fc0"/><path d="M609.5 375H614.5V379L612 382L609.5 379Z" fill="#2a82e4"/>
<use href="#kf" x="612" y="410"/><use href="#kf" x="612" y="420"/><use href="#kf" x="612" y="429.7"/><use href="#kf" x="612" y="439.5"/><use href="#kf" x="612" y="449.3"/><use href="#kf" x="612" y="479"/><use href="#kf" x="612" y="488.8"/><use href="#kf" x="612" y="498.5"/><use href="#kf" x="612" y="508.3"/><use href="#kf" x="612" y="518"/>
<use href="#kf" x="612" y="469"/>
<path d="M612 457L614.5 459.2L612 461.5L609.5 459.2ZM612 525.5L614.5 527.8L612 530L609.5 527.8Z" fill="#8fa7c8"/>
<path d="M648 457L650.5 459.2L648 461.5L645.5 459.2ZM648 525.5L650.5 527.8L648 530L645.5 527.8Z" fill="#b5b5b5"/>
<text x="616" y="542.7" style="font-family:'Liberation Mono',monospace;font-size:8.6px;fill:#8a8a8a">loopOut()</text>
<path d="M609.5 640H662" stroke="#3d3d3d" stroke-width="1"/><path d="M612 637.5L614 640L612 642.5Z" fill="#999"/><circle cx="625" cy="640" r="2.3" fill="none" stroke="#bbb"/><path d="M658 642.5L661 638L663 640.5L664.5 638.5L667 642.5Z" fill="#aaa"/>
</svg>
</body></html>
